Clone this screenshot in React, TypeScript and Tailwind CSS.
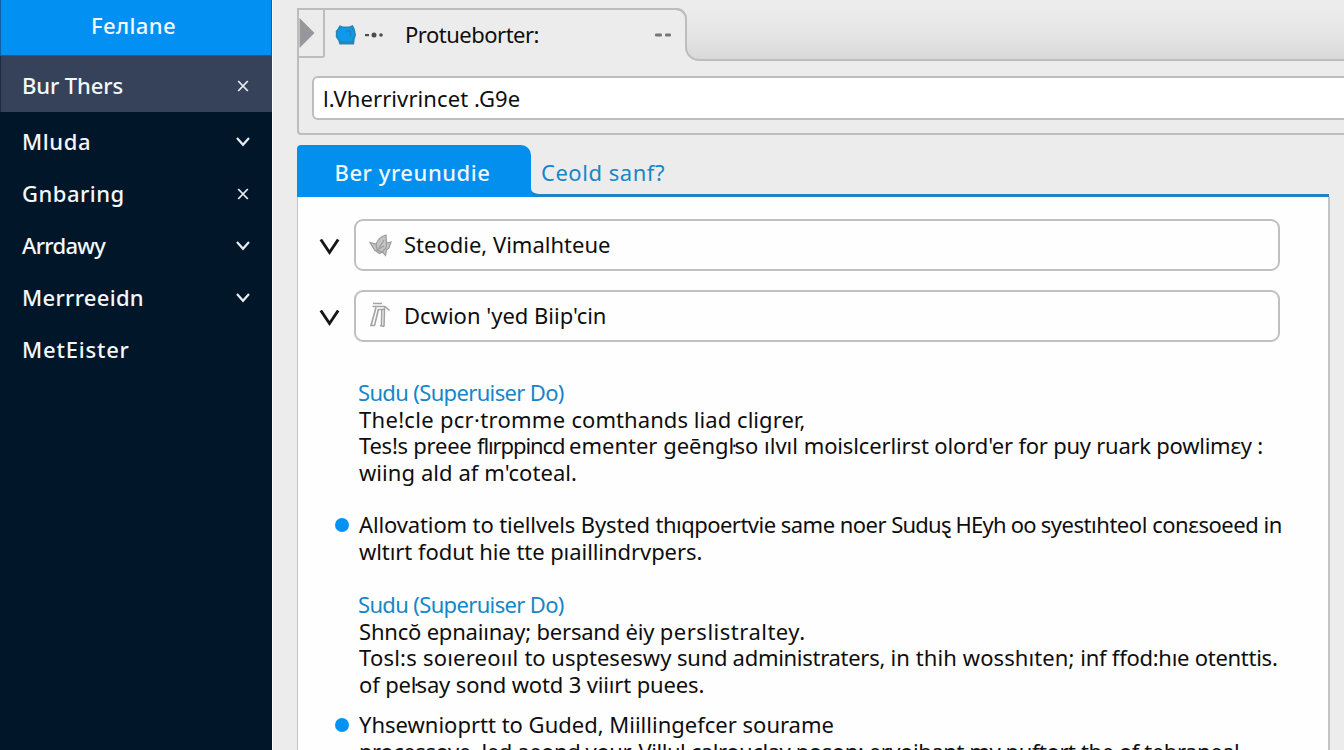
import React from 'react';
import clsx from 'clsx';

interface MenuItem {
    label: string;
    tracking: string;
    icon?: 'close' | 'down';
    active?: boolean;
}

// a run of text with its own letter spacing
type Run = [text: string, tracking?: string];

const menu: MenuItem[] = [
    { label: 'Bur Thers', tracking: 'tracking-[-0.1px]', icon: 'close', active: true },
    { label: 'Mluda', tracking: 'tracking-[0.6px]', icon: 'down' },
    { label: 'Gnbaring', tracking: 'tracking-[0.5px]', icon: 'close' },
    { label: 'Arrdawy', tracking: 'tracking-[-0.7px]', icon: 'down' },
    { label: 'Merrreeidn', tracking: 'tracking-[0.3px]', icon: 'down' },
    { label: 'MetEister', tracking: 'tracking-[0.8px]' },
];

const introLines: Run[][] = [
    [['The!cle pcr·tromme ', 'tracking-[0.3px]'], ['comthands liad cligrer,', 'tracking-[0.06px]']],
    [
        ['Tes!s preee ', 'tracking-[-0.25px]'],
        ['flırppincd ', 'tracking-[-1.1px]'],
        ['ementer geēngŀso ılvıl '],
        ["moislcerlirst olord'er ", 'tracking-[-0.13px]'],
        ['for puy ruark powlimɛy :', 'tracking-[-0.25px]'],
    ],
    [["wiing ald af m'coteal.", 'tracking-[0.07px]']],
];

const allovationLines: Run[][] = [
    [
        ['Allovatiom to tiellvels Bysted ', 'tracking-[-0.13px]'],
        ['thıqpoertvie same noer ', 'tracking-[-0.52px]'],
        ['Suduȿ HEyh oo ', 'tracking-[-0.79px]'],
        ['syestıhteol conɛsoeed in', 'tracking-[-0.46px]'],
    ],
    [['wltırt fodut hie tte pıaillindrvpers.', 'tracking-[-0.06px]']],
];

const detailLines: Run[][] = [
    [['Shncŏ epnaiınay; bersand ėiy ', 'tracking-[-0.2px]'], ['perslistraltey.', 'tracking-[0.5px]']],
    [
        ['Tosl:s soıereoııl ', 'tracking-[0.22px]'],
        ['to uspteseswy '],
        ['sund administraters, ', 'tracking-[-0.29px]'],
        ['in thih wosshıten; ', 'tracking-[0.1px]'],
        ['inf ffod:hıe otenttis.', 'tracking-[-0.27px]'],
    ],
    [['of peŀsay sond wotd 3 viiırt puees.', 'tracking-[-0.15px]']],
];

const moreLines: Run[][] = [
    [['Yhsewnioprtt to Guded, Miillingefcer sourame']],
    [['processove, led aeond your, Villul calrouclay poson; eryoihant my puftort the of tebraneal', 'tracking-[-0.42px]']],
];

function CloseIcon() {
    return (
        <svg width="12" height="12" viewBox="0 0 12 12" fill="none" stroke="#e6ecf1" strokeWidth="1.8">
            <path d="M1.2 1l9.6 10M10.8 1l-9.6 10" />
        </svg>
    );
}

function DownIcon() {
    return (
        <svg width="14" height="10" viewBox="0 0 14 10" fill="none" stroke="#e6ecf1" strokeWidth="2.2">
            <path d="M1 1l6 6.8L13 1" />
        </svg>
    );
}

function Lines({ lines }: { lines: Run[][] }) {
    return (
        <>
            {lines.map((runs, i) => (
                <p key={i} className="flex h-[26.5px] whitespace-pre">
                    {runs.map(([text, tracking]) => (
                        <span key={text} className={tracking}>{text}</span>
                    ))}
                </p>
            ))}
        </>
    );
}

function Section({ lines }: { lines: Run[][] }) {
    return (
        <section className="pl-[61px]">
            <h2 className="-ml-px tracking-[-0.65px] text-[#1686c9]">Sudu (Superuiser Do)</h2>
            <Lines lines={lines} />
        </section>
    );
}

function Bullet({ lines }: { lines: Run[][] }) {
    return (
        <div className="flex pl-[37px]">
            <span className="mt-[7px] mr-[10px] h-[14px] w-[14px] shrink-0 rounded-full bg-[#0592f5]" />
            <div>
                <Lines lines={lines} />
            </div>
        </div>
    );
}

function Field({ icon, children }: { icon: React.ReactNode; children: React.ReactNode }) {
    return (
        <div className="flex items-center pl-[21px]">
            <svg className="mt-[3px]" width="21" height="18" viewBox="0 0 21 18" fill="none" stroke="#161616" strokeWidth="2.9">
                <path d="M1.8 1.500l8.700 13L19.200 1.500" />
            </svg>
            <div className="ml-[14px] flex h-[52px] w-[926px] items-center rounded-[9px] border-2 border-[#c0c0c0] pl-[13px]">
                {icon}
                <span className="ml-[12px] pb-[2px]">{children}</span>
            </div>
        </div>
    );
}

function Sidebar() {
    return (
        <aside className="flex w-[272px] shrink-0 flex-col bg-[#011629] text-[#f4f7fa]">
            <div className="flex h-[56px] items-center justify-center border-x border-b border-[#0a5fa6] bg-[#0390f3] pb-[4px] pr-[5px] font-medium tracking-[0.38px]">
                Feлlane
            </div>
            {menu.map((item) => (
                <div
                    key={item.label}
                    className={clsx(
                        'flex items-center justify-between pr-[22px] font-medium',
                        item.active ? 'mb-[4px] h-[56px] border-l border-[#1b2c42] bg-[#35425a] pt-[3px] pl-[21px]' : 'h-[52px] pl-[22px]',
                    )}
                >
                    <span className={clsx(!item.active && 'pb-[2px]', item.tracking)}>{item.label}</span>
                    <span className="flex w-[14px] justify-center">
                        {item.icon === 'close' && <CloseIcon />}
                        {item.icon === 'down' && <DownIcon />}
                    </span>
                </div>
            ))}
        </aside>
    );
}

function Toolbar() {
    return (
        <div className="h-[127px] shrink-0 rounded-bl-[4px] border-b-2 border-l-2 border-[#bdbdbd]">
            <div className="flex h-[53px]">
                <div className="flex w-[388px] rounded-tr-[11px] border-t-2 border-[#bdbdbd]">
                    <div className="flex h-[48px] w-[26px] items-center rounded-br-[3px] border-b-2 border-r-2 border-[#bdbdbd]">
                        <svg width="16" height="30" viewBox="0 0 16 30">
                            <path d="M0.5 0L15.5 15L0.5 30Z" fill="#96979a" />
                        </svg>
                    </div>
                    <div className="flex h-[50px] flex-1 items-center pl-[10px]">
                        <svg width="22" height="22" viewBox="0 0 22 22">
                            <path d="M4.500 1.200L8 2.600h6L17.800 1l2 4 1.200 6-1.200 4-.8 5.500H4.500l-1.300-4L.8 13V7l2-2.500z" fill="#2488b8" />
                            <path d="M6 4h10l3 4v5l-3 4H6l-3.500-5L3 7z" fill="#0d99ec" />
                            <path d="M11.500 7.500l4-.5v5.500" stroke="#2c7fb5" strokeWidth="1.500" fill="none" />
                        </svg>
                        <svg className="ml-[7px]" width="20" height="6" viewBox="0 0 20 6" fill="#4c4c4c">
                            <rect x="1" y="2" width="4" height="2.200" />
                            <circle cx="10" cy="3" r="2.500" />
                            <circle cx="17" cy="3" r="1.800" />
                        </svg>
                        <span className="ml-[21px] pb-[2px] tracking-[-0.5px]">Protueborter:</span>
                        <svg className="ml-auto mr-[15px]" width="17" height="4" viewBox="0 0 17 4" fill="#777">
                            <rect x="0" y="0.500" width="7" height="3" rx="1" />
                            <rect x="10" y="0.500" width="6" height="3" rx="1" />
                        </svg>
                    </div>
                </div>
                <div className="flex flex-1 flex-col">
                    <div className="-ml-[11px] flex h-[26px]">
                        <div className="w-[11px] rounded-tr-[11px] border-r-2 border-t-2 border-[#bdbdbd]" />
                        <div className="flex-1 bg-linear-to-b from-[#ececec] to-[#e5e5e5]" />
                    </div>
                    <div className="-ml-[2px] h-[27px] rounded-bl-[14px] border-b-2 border-l-2 border-[#bdbdbd] bg-linear-to-b from-[#e5e5e5] to-[#d9d9d9]" />
                </div>
            </div>
            <div className="mt-[15px] ml-[13px] flex h-[44px] items-center rounded-l-[6px] border-2 border-r-0 border-[#bdbdbd] bg-white pl-[9px] tracking-[0.1px]">
                l.Vherrivrincet .G9e
            </div>
        </div>
    );
}

export default function App() {
    return (
        <div className="flex h-[750px] w-[1344px] overflow-hidden bg-[#ececec] font-['Noto_Sans','Open_Sans',sans-serif] text-[22px] leading-[26.5px] text-[#0e0e0e]">
            <Sidebar />
            <main className="flex min-w-0 flex-1 flex-col border-l border-white pt-[8px] pl-[24px]">
                <Toolbar />
                <div className="mt-[10px] flex h-[52px] w-[1032px] shrink-0">
                    <div className="flex w-[234px] items-center justify-center rounded-tl-[4px] rounded-tr-[10px] bg-[#038fee] pr-[3px] pt-[3px] font-medium tracking-[0.56px] text-[#eef7ff]">
                        Ber yreunudie
                    </div>
                    <div className="flex flex-1 bg-[#038fee]">
                        <div className="flex flex-1 items-center rounded-bl-[8px] border-b-[3px] border-[#1c84c6] bg-[#ececec] pl-[10px] pt-[6px] tracking-[0.53px] text-[#1686c9]">
                            Ceold sanf?
                        </div>
                    </div>
                </div>
                <div className="h-[560px] w-[1033px] shrink-0 border-l border-r-2 border-[#c4c4c4] bg-[#fefefe] pt-[22px]">
                    <Field
                        icon={
                            <svg width="23" height="23" viewBox="0 0 23 23" fill="#c4c4c4" stroke="#9c9c9c" strokeWidth="1.2">
                                <path d="M7 10C9 5 13 2 17 1l.5 8 4.500-1-2 6-2.500 2-1 5.500-3-3.500-3 1.500-5-3.500L1 8.500z" />
                                <path d="M7 10l1 6 5 2 4-4 .5-5M10 14l5-8M8 16l7-4" fill="none" />
                            </svg>
                        }
                    >
                        Steodie, Vimalhteue
                    </Field>
                    <div className="mt-[19px]">
                        <Field
                            icon={
                                <svg className="-mt-[2px]" width="23" height="27" viewBox="0 0 23 27" fill="none" stroke="#a3a3a3" strokeWidth="1.6">
                                    <path d="M4 1.500h9M3.500 4.500h12.500l4.500 4M7 5.500L2 23.500M9.500 7L5.500 23.500M1 23.500h4.500M9.500 7.500H15M15.500 5.500l-.5 19M12.800 8l-.3 15.500M11 23.500l4 1" />
                                </svg>
                            }
                        >
                            Dcwion 'yed Biip'cin
                        </Field>
                    </div>
                    <div className="mt-[37px]">
                        <Section lines={introLines} />
                    </div>
                    <div className="mt-[26px]">
                        <Bullet lines={allovationLines} />
                    </div>
                    <div className="mt-[27px]">
                        <Section lines={detailLines} />
                    </div>
                    <div className="mt-[14px]">
                        <Bullet lines={moreLines} />
                    </div>
                </div>
            </main>
        </div>
    );
}
